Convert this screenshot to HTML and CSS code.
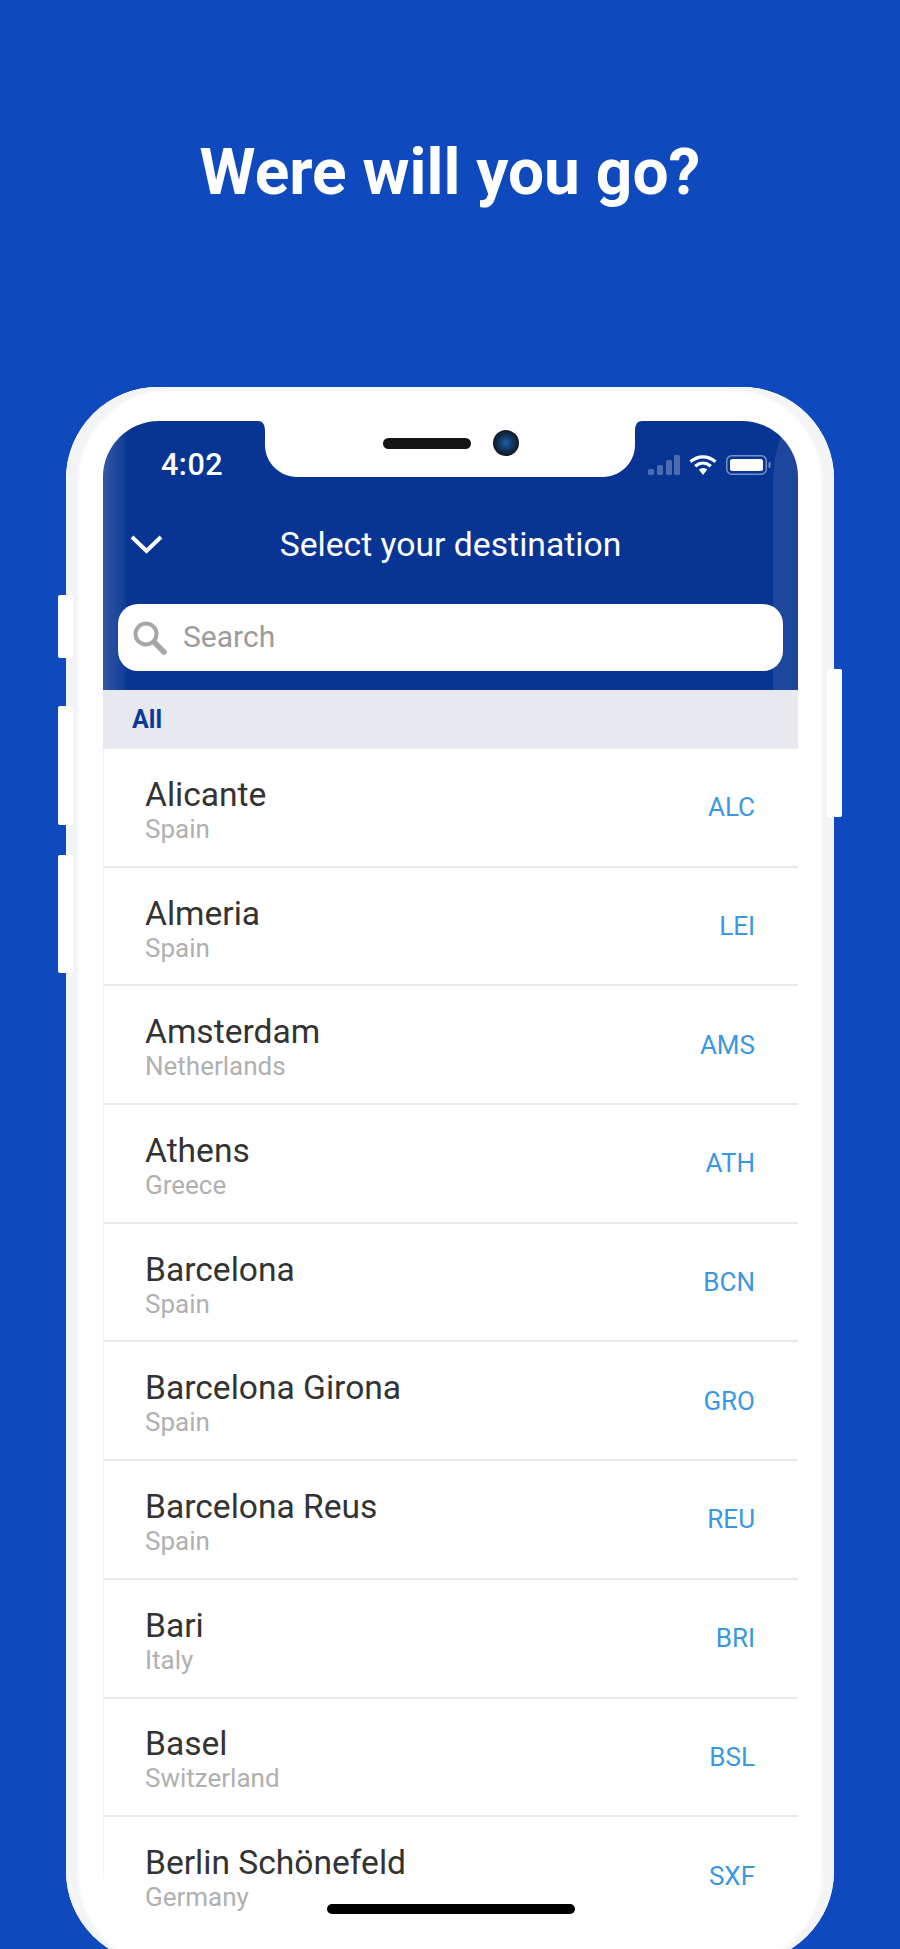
FILE: index.html
```html
<!DOCTYPE html>
<html lang="en">
<head>
    <meta charset="UTF-8">
    <title>Were will you go?</title>
    <link rel="stylesheet" href="styles.css">
</head>
<body>
<h1 class="headline">Were will you go?</h1>

<div class="phone">
    <span class="side-btn btn-mute"></span>
    <span class="side-btn btn-up"></span>
    <span class="side-btn btn-down"></span>
    <span class="side-btn btn-power"></span>

    <div class="screen">
        <header class="top">
            <span class="gloss gloss-left"></span>
            <span class="gloss gloss-right"></span>

            <svg class="notch" width="384" height="56" viewBox="0 0 384 56">
                <path fill="#fff" d="M0 0H384C379 0 377 4 377 10V24C377 42 362 56 345 56H39C22 56 7 42 7 24V10C7 4 5 0 0 0Z"/>
            </svg>
            <span class="speaker"></span>
            <span class="camera"></span>

            <div class="status">
                <span class="time">4:02</span>
                <div class="status-icons">
                    <svg width="32" height="20" viewBox="0 0 32 20">
                        <g fill="#fff" opacity="0.28">
                            <rect x="0" y="14" width="6" height="6" rx="1.5"/>
                            <rect x="9" y="10" width="6" height="10" rx="1.5"/>
                            <rect x="18" y="5" width="6" height="15" rx="1.5"/>
                            <rect x="26" y="0" width="6" height="20" rx="1.5"/>
                        </g>
                    </svg>
                    <svg width="28" height="20" viewBox="0 0 28 20">
                        <g fill="none" stroke="#fff" stroke-width="3.2">
                            <path d="M1.5 6.8C9 .2 19 .2 26.5 6.8"/>
                            <path d="M6.2 11.2C11 7.2 17 7.2 21.8 11.2"/>
                        </g>
                        <path fill="#fff" d="M9.8 14.6C12.4 12.6 15.6 12.6 18.2 14.6L14 20Z"/>
                    </svg>
                    <svg width="45" height="20" viewBox="0 0 45 20">
                        <rect x="0.75" y="0.75" width="39.5" height="18.5" rx="5" fill="none" stroke="#fff" stroke-opacity="0.45" stroke-width="1.5"/>
                        <rect x="4" y="4" width="33" height="12" rx="2.5" fill="#fff"/>
                        <rect x="42.5" y="7" width="2" height="6" rx="1" fill="#fff" fill-opacity="0.45"/>
                    </svg>
                </div>
            </div>

            <div class="nav">
                <svg class="chevron" width="33" height="20" viewBox="0 0 33 20">
                    <path fill="none" stroke="#fff" stroke-width="4" d="M2 3L16.5 17L31 3"/>
                </svg>
                <span class="nav-title">Select your destination</span>
            </div>

            <div class="search">
                <svg width="36" height="34" viewBox="0 0 36 34">
                    <circle cx="14" cy="13" r="10.5" fill="none" stroke="#a6a6a6" stroke-width="4"/>
                    <path fill="none" stroke="#a6a6a6" stroke-width="5.5" stroke-linecap="round" d="M22 21L32 31"/>
                </svg>
                <span class="search-text">Search</span>
            </div>
        </header>

        <div class="section">All</div>

        <ul class="airports">
            <li><div class="place"><p class="city">Alicante</p><p class="country">Spain</p></div><span class="code">ALC</span></li>
            <li><div class="place"><p class="city">Almeria</p><p class="country">Spain</p></div><span class="code">LEI</span></li>
            <li><div class="place"><p class="city">Amsterdam</p><p class="country">Netherlands</p></div><span class="code">AMS</span></li>
            <li><div class="place"><p class="city">Athens</p><p class="country">Greece</p></div><span class="code">ATH</span></li>
            <li><div class="place"><p class="city">Barcelona</p><p class="country">Spain</p></div><span class="code">BCN</span></li>
            <li><div class="place"><p class="city">Barcelona Girona</p><p class="country">Spain</p></div><span class="code">GRO</span></li>
            <li><div class="place"><p class="city">Barcelona Reus</p><p class="country">Spain</p></div><span class="code">REU</span></li>
            <li><div class="place"><p class="city">Bari</p><p class="country">Italy</p></div><span class="code">BRI</span></li>
            <li><div class="place"><p class="city">Basel</p><p class="country">Switzerland</p></div><span class="code">BSL</span></li>
            <li><div class="place"><p class="city">Berlin Schönefeld</p><p class="country">Germany</p></div><span class="code">SXF</span></li>
        </ul>

        <span class="home-bar"></span>
    </div>
</div>
</body>
</html>
```

FILE: styles.css
```css
html, body {
    margin: 0;
    height: 1949px;
    overflow: hidden;
}

body {
    font-family: Roboto, "Liberation Sans", sans-serif;
    background-color: #0e49bd;
    padding-top: 137px;
    box-sizing: border-box;
}

.headline {
    margin: 0 0 178px;
    font-size: 64px;
    line-height: 72px;
    font-weight: 700;
    color: #fff;
    text-align: center;
}

.phone {
    position: relative;
    width: 768px;
    height: 1576px;
    margin-left: 66px;
    padding: 34px 36px 34px 37px;
    box-sizing: border-box;
    background-color: #fff;
    border-radius: 92px;
    box-shadow: inset 12px 3px 3px #f3f4f6, inset -12px 3px 3px #f3f4f6;
}

.side-btn {
    position: absolute;
    left: -8px;
    width: 15px;
    background-color: #fff;
    border-radius: 2px;
}

.btn-mute { top: 208px; height: 63px; }
.btn-up { top: 319px; height: 119px; }
.btn-down { top: 468px; height: 118px; }
.btn-power { top: 282px; left: 761px; height: 148px; }

.screen {
    position: relative;
    height: 100%;
    overflow: hidden;
    background-color: #fff;
    border-radius: 56px;
}

.top {
    position: relative;
    height: 269px;
    background-color: #083493;
}

.gloss {
    position: absolute;
    top: 0;
    bottom: 0;
}

.gloss-left {
    left: 0;
    width: 23px;
    background: linear-gradient(to right, rgba(255, 255, 255, 0.18), rgba(255, 255, 255, 0.03));
}

.gloss-right {
    right: 0;
    width: 25px;
    background-color: rgba(255, 255, 255, 0.09);
    border-top-left-radius: 25px 60px;
}

.notch {
    position: absolute;
    top: 0;
    left: 155px;
}

.speaker {
    position: absolute;
    top: 17px;
    left: 280px;
    width: 88px;
    height: 11px;
    background-color: #151515;
    border-radius: 6px;
}

.camera {
    position: absolute;
    top: 9px;
    left: 390px;
    width: 26px;
    height: 26px;
    border-radius: 50%;
    background: radial-gradient(circle at 50% 50%, #1f5fa8 0, #123a66 35%, #14161c 72%);
}

.status {
    display: flex;
    justify-content: space-between;
    align-items: center;
    height: 88px;
    padding: 0 27px 0 58px;
}

.time {
    margin-top: -2px;
    font-size: 30.5px;
    font-weight: 500;
    letter-spacing: 0.5px;
    color: #fff;
}

.status-icons {
    display: flex;
    align-items: center;
    gap: 9px;
}

.nav {
    display: grid;
    grid-template-columns: 1fr auto 1fr;
    align-items: center;
    height: 70px;
}

.chevron {
    margin-left: 27px;
}

.nav-title {
    font-size: 33.7px;
    color: #fff;
}

.search {
    position: relative;
    display: flex;
    align-items: center;
    gap: 15px;
    height: 67px;
    margin: 25px 15px 0;
    padding-left: 14px;
    background-color: #fff;
    border-radius: 20px;
    font-size: 30px;
    color: #9b9b9b;
}

.search-text {
    margin-top: -2px;
}

.section {
    height: 59px;
    padding-left: 29px;
    background-color: #e8e9ef;
    font-size: 25px;
    font-weight: 700;
    line-height: 59px;
    color: #0c3a9c;
}

.airports {
    margin: 0;
    padding: 0;
    list-style: none;
    border-left: 1px solid #f4f4f6;
}

.airports li {
    display: flex;
    justify-content: space-between;
    align-items: center;
    height: 118.7px;
    padding: 0 43px 0 41px;
    box-sizing: border-box;
    border-bottom: 2px solid #e8e9ec;
}

.place {
    margin-top: 8px;
}

.airports p {
    margin: 0;
}

.city {
    font-size: 33.6px;
    line-height: 36px;
    color: #333;
}

.country {
    font-size: 26px;
    line-height: 33px;
    color: #b0b0b0;
}

.code {
    font-size: 26px;
    color: #3a97e2;
}

.home-bar {
    position: absolute;
    left: 224px;
    top: 1483px;
    width: 248px;
    height: 10px;
    background-color: #000;
    border-radius: 5px;
}
```
